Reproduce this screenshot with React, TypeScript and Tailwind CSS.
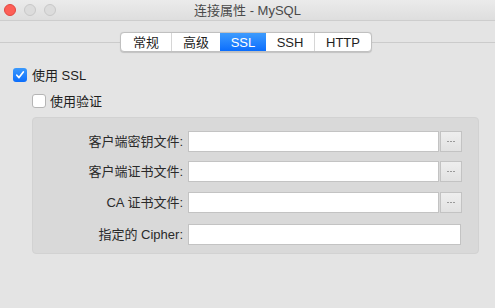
import React from "react";

const font = { fontFamily: '"Liberation Sans", "Noto Sans CJK SC", sans-serif' };

function Check({ checked }: { checked: boolean }) {
  if (checked) {
    return (
      <div className="w-[14px] h-[14px] rounded-[3px] bg-gradient-to-b from-[#3b99fc] to-[#0a6dfc] flex items-center justify-center">
        <svg width="10" height="10" viewBox="0 0 10 10">
          <path d="M1.8 5.2 L4 7.6 L8.3 2" stroke="white" strokeWidth="1.7" fill="none" strokeLinecap="round" strokeLinejoin="round" />
        </svg>
      </div>
    );
  }
  return <div className="w-[14px] h-[14px] rounded-[3px] bg-white border border-[#b5b5b5]" />;
}

function Row({ label, button, mt }: { label: string; button: boolean; mt: string }) {
  return (
    <div className={`flex items-center h-[21px] ${mt}`}>
      <div className="w-[150px] text-right text-[13px] text-[#2a2a2a]">{label}</div>
      <div className="ml-[5px] flex h-[21px]">
        <div className={`${button ? "w-[251px]" : "w-[273px]"} h-[21px] bg-white border border-[#c3c3c3]`} />
        {button && (
          <div className="ml-[1px] w-[22px] h-[21px] border border-[#c3c3c3] bg-gradient-to-b from-[#eeeeee] to-[#e2e2e2] flex items-center justify-center gap-[1px]">
            <span className="w-[2px] h-[1.5px] bg-[#9a9a9a]" />
            <span className="w-[2px] h-[1.5px] bg-[#9a9a9a]" />
            <span className="w-[2px] h-[1.5px] bg-[#9a9a9a]" />
          </div>
        )}
      </div>
    </div>
  );
}

export default function App() {
  const tabs = [
    { t: "常规", w: "w-[50px]" },
    { t: "高级", w: "w-[49px]" },
    { t: "SSL", w: "w-[46px]", active: true },
    { t: "SSH", w: "w-[48px]" },
    { t: "HTTP", w: "w-[57px]" },
  ];
  return (
    <div className="w-[495px] h-[308px] bg-[#e4e4e4] overflow-hidden" style={font}>
      {/* title bar */}
      <div className="h-[21px] bg-gradient-to-b from-[#ebebeb] to-[#dedede] border-b border-[#cdcdcd] grid grid-cols-[70px_1fr_70px] items-center">
        <div className="flex items-center gap-[8px] pl-[4px]">
          <div className="w-[12px] h-[12px] rounded-full bg-[#fd5f57] border border-[#e2463f]" />
          <div className="w-[12px] h-[12px] rounded-full bg-[#dcdcdc] border border-[#c8c8c8]" />
          <div className="w-[12px] h-[12px] rounded-full bg-[#dcdcdc] border border-[#c8c8c8]" />
        </div>
        <div className="text-center text-[13px] text-[#4a4a4a] leading-none">连接属性 - MySQL</div>
        <div />
      </div>

      {/* tabs */}
      <div className="relative mt-[11px] h-[20px]">
        <div className="absolute left-0 right-0 top-[10px] h-px bg-[#cbcbcb]" />
        <div className="relative flex justify-center">
          <div className="flex h-[20px] rounded-[4px] border border-[#c0c0c0] bg-white overflow-hidden shadow-[0_0.5px_1px_rgba(0,0,0,0.15)] -ml-[3px]">
            {tabs.map((tab, i) => (
              <div
                key={tab.t}
                className={`${tab.w} flex items-center justify-center text-[13px] leading-none ${
                  tab.active
                    ? "bg-gradient-to-b from-[#3d9bfd] to-[#0a6dfd] text-white"
                    : "text-[#1e1e1e]"
                } ${i > 0 && !tab.active && !tabs[i - 1].active ? "border-l border-[#d6d6d6]" : ""}`}
              >
                {tab.t}
              </div>
            ))}
          </div>
        </div>
      </div>

      {/* checkboxes */}
      <div className="mt-[16px] pl-[13px] flex items-center h-[14px]">
        <Check checked />
        <span className="ml-[5px] text-[13px] text-[#1e1e1e] leading-none">使用 SSL</span>
      </div>
      <div className="mt-[12px] pl-[32px] flex items-center h-[14px]">
        <Check checked={false} />
        <span className="ml-[4px] text-[13px] text-[#1e1e1e] leading-none">使用验证</span>
      </div>

      {/* group box */}
      <div className="mt-[9px] ml-[32px] w-[447px] h-[137px] rounded-[4px] bg-[#d9d9d9] border border-[#d2d2d2] pt-[13px]">
        <Row label="客户端密钥文件:" button mt="" />
        <Row label="客户端证书文件:" button mt="mt-[9px]" />
        <Row label="CA 证书文件:" button mt="mt-[10px]" />
        <Row label="指定的 Cipher:" button={false} mt="mt-[11px]" />
      </div>
    </div>
  );
}
